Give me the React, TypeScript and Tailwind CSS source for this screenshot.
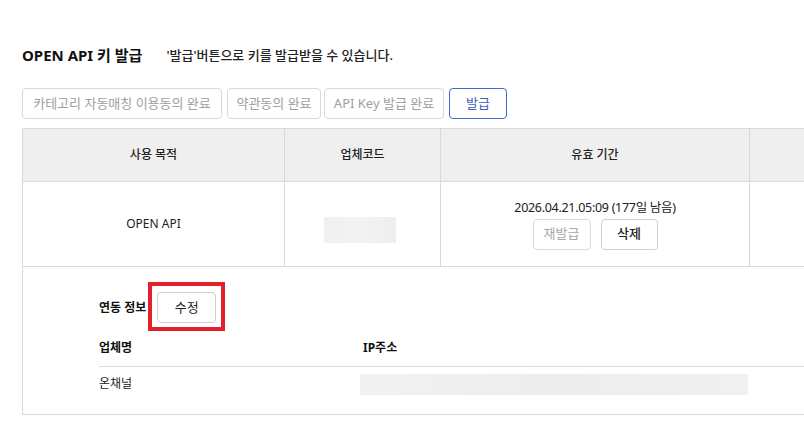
import React from "react";

const font = { fontFamily: '"Noto Sans", "Noto Sans CJK KR", sans-serif' };

export default function App() {
  return (
    <div
      className="w-[804px] h-[439px] overflow-hidden bg-white text-[#222]"
      style={font}
    >
      <div className="pl-[22px] pt-[45px] w-[1100px]">
        {/* Title */}
        <div className="flex items-center h-[20px]">
          <h1 className="text-[15px] font-bold text-[#111] leading-[20px]">
            OPEN API 키 발급
          </h1>
          <p className="ml-[24px] text-[13px] font-medium text-[#222] leading-[20px]">
            '발급'버튼으로 키를 발급받을 수 있습니다.
          </p>
        </div>

        {/* Step buttons */}
        <div className="mt-[23px] flex items-center h-[31px]">
          <button className="w-[200px] h-[31px] rounded-[4px] border border-[#d9d9d9] bg-white text-[13px] text-[#a0a0a0]">
            카테고리 자동매칭 이용동의 완료
          </button>
          <button className="ml-[5px] w-[94px] h-[31px] rounded-[4px] border border-[#d9d9d9] bg-white text-[13px] text-[#a0a0a0]">
            약관동의 완료
          </button>
          <button className="ml-[3px] w-[120px] h-[31px] rounded-[4px] border border-[#d9d9d9] bg-white text-[13px] text-[#a0a0a0]">
            API Key 발급 완료
          </button>
          <button className="ml-[5px] w-[58px] h-[31px] rounded-[4px] border border-[#3d6ccc] bg-white text-[13px] text-[#3a5fc2]">
            발급
          </button>
        </div>

        {/* Table */}
        <div className="mt-[9px] border-l border-[#d9d9d9]">
          <div className="flex h-[54px] border-t border-b border-[#d9d9d9] bg-[#efefef] text-[12px] font-medium text-[#222]">
            <div className="w-[262px] border-r border-[#d9d9d9] flex items-center justify-center">
              사용 목적
            </div>
            <div className="w-[156px] border-r border-[#d9d9d9] flex items-center justify-center">
              업체코드
            </div>
            <div className="w-[309px] border-r border-[#d9d9d9] flex items-center justify-center">
              유효 기간
            </div>
            <div className="flex-1" />
          </div>
          <div className="flex h-[85px] border-b border-[#d9d9d9] text-[12px] text-[#222]">
            <div className="w-[262px] border-r border-[#d9d9d9] flex items-center justify-center">
              OPEN API
            </div>
            <div className="w-[156px] border-r border-[#d9d9d9] flex items-center justify-center">
              <div className="mt-[11px] -ml-[5px] w-[72px] h-[26px] bg-gradient-to-r from-[#f0f0f0] via-[#f3f3f3] to-[#eeeeee]" />
            </div>
            <div className="w-[309px] border-r border-[#d9d9d9] flex flex-col items-center justify-center">
              <div className="text-[12.5px] leading-[18px] tracking-[-0.3px]">2026.04.21.05:09 (177일 남음)</div>
              <div className="mt-[2px] flex gap-[10px]">
                <button className="w-[58px] h-[31px] rounded-[4px] border border-[#dcdcdc] bg-white text-[13px] text-[#a8a8a8]">
                  재발급
                </button>
                <button className="w-[57px] h-[31px] rounded-[4px] border border-[#cfcfcf] bg-white text-[13px] font-medium text-[#222]">
                  삭제
                </button>
              </div>
            </div>
            <div className="flex-1" />
          </div>

          {/* Integration info */}
          <div className="border-b border-[#d9d9d9] pl-[76px] pt-[25px] pb-[13px] text-[12px]">
            <div className="flex items-center h-[31px]">
              <span className="font-bold text-[#111]">연동 정보</span>
              <div className="relative ml-[11px]">
                <button className="w-[59px] h-[31px] rounded-[4px] border border-[#cfcfcf] bg-white text-[13px] text-[#222]">
                  수정
                </button>
                <span className="pointer-events-none absolute -left-[9px] -top-[10px] -right-[9px] -bottom-[8px] border-[4px] border-[#e3202b]" />
              </div>
            </div>
            <div className="mt-[6px] flex items-center h-[38px] border-b border-[#dcdcdc] font-bold text-[#111]">
              <div className="w-[264px]">업체명</div>
              <div>IP주소</div>
            </div>
            <div className="flex items-center h-[34px] text-[#222]">
              <div className="w-[261px]">온채널</div>
              <div className="w-[388px] h-[21px] bg-gradient-to-r from-[#f1f1f1] via-[#ededed] to-[#f0f0f0]" />
            </div>
          </div>
        </div>
      </div>
    </div>
  );
}
